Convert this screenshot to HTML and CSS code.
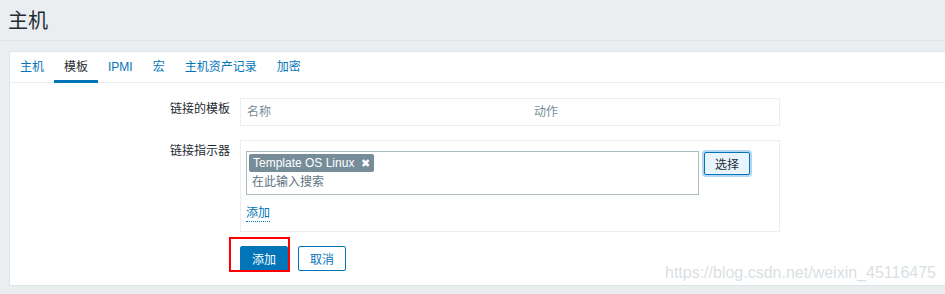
FILE: index.html
```html
<!DOCTYPE html>
<html lang="zh-CN">
<head>
    <meta charset="UTF-8">
    <title>主机</title>
    <link rel="stylesheet" href="styles.css">
</head>
<body>

<header class="page-header">
    <h1>主机</h1>
</header>

<main class="panel">
    <ul class="tabs">
        <li>主机</li>
        <li class="active">模板</li>
        <li>IPMI</li>
        <li>宏</li>
        <li>主机资产记录</li>
        <li>加密</li>
    </ul>

    <form class="form-grid">
        <label class="form-label">链接的模板</label>
        <div class="field">
            <table class="linked-table">
                <tr>
                    <th class="col-name">名称</th>
                    <th>动作</th>
                </tr>
            </table>
        </div>

        <label class="form-label">链接指示器</label>
        <div class="field box">
            <div class="select-row">
                <div class="multiselect">
                    <div class="tags">
                        <span class="tag">Template OS Linux <span class="tag-remove">&#10006;</span></span>
                    </div>
                    <div class="search">在此输入搜索</div>
                </div>
                <button type="button" class="btn-alt">选择</button>
            </div>
            <a class="link-add">添加</a>
        </div>

        <div></div>
        <div class="actions">
            <span class="highlight">
                <button type="submit" class="btn-primary">添加</button>
            </span>
            <button type="button" class="btn-cancel">取消</button>
        </div>
    </form>

    <div class="watermark">https://blog.csdn.net/weixin_45116475</div>
</main>

</body>
</html>
```

FILE: styles.css
```css
body {
    font-family: "Liberation Sans", Arial, "Noto Sans CJK SC", sans-serif;
    font-size: 12px;
    color: #1f2c33;
    margin: 0;
    padding: 0;
    background-color: #ebeef0;
}
.page-header {
    height: 40px;
    padding: 0 8px;
    border-bottom: 1px solid #dfe4e7;
}
.page-header h1 {
    margin: 0;
    font-size: 20px;
    font-weight: normal;
    line-height: 42px;
}
.panel {
    position: relative;
    margin: 10px 0 0 9px;
    background: #fff;
    border: 1px solid #dfe4e7;
    border-right: none;
}
.tabs {
    display: flex;
    list-style: none;
    margin: 0;
    padding: 0;
    height: 31px;
    box-sizing: border-box;
    border-bottom: 1px solid #ebeef0;
}
.tabs li {
    height: 31px;
    line-height: 30px;
    padding: 0 10px;
    color: #0275b8;
    box-sizing: border-box;
}
.tabs li.active {
    color: #1f2c33;
    box-shadow: inset 0 -3px 0 #0275b8;
}
.form-grid {
    display: grid;
    grid-template-columns: 220px 540px;
    column-gap: 10px;
    row-gap: 14px;
    padding: 15px 0 14px 0;
}
.form-label {
    text-align: right;
    line-height: 14px;
    padding-top: 4px;
}
.linked-table {
    width: 100%;
    border-collapse: collapse;
    border: 1px solid #ebeef0;
}
.linked-table th {
    text-align: left;
    font-weight: normal;
    color: #768d99;
    line-height: 14px;
    padding: 6px 6px 6px 6px;
}
.linked-table .col-name {
    width: 275px;
}
.box {
    border: 1px solid #ebeef0;
    padding: 10px 5px 9px 5px;
}
.select-row {
    display: flex;
    align-items: flex-start;
}
.multiselect {
    width: 453px;
    height: 44px;
    box-sizing: border-box;
    border: 1px solid #acbbc2;
    padding: 2px 2px 0 2px;
}
.tags {
    display: flex;
}
.tag {
    display: inline-block;
    height: 18px;
    line-height: 18px;
    padding: 0 4px;
    background: #768d99;
    color: #fff;
    border-radius: 2px;
    font-size: 12px;
}
.tag-remove {
    font-size: 11px;
    margin-left: 3px;
}
.search {
    color: #5e737e;
    line-height: 20px;
    padding-left: 3px;
}
.btn-alt {
    margin: 1px 0 0 5px;
    width: 46px;
    height: 23px;
    padding: 0;
    font-family: inherit;
    font-size: 12px;
    color: #1f2c33;
    background: #e8f5ff;
    border: 1px solid #0275b8;
    border-radius: 2px;
    box-shadow: 0 0 0 2px #b3d7f2;
}
.link-add {
    display: inline-block;
    margin-top: 11px;
    line-height: 15px;
    color: #0275b8;
    border-bottom: 1px dotted #0275b8;
}
.actions {
    display: flex;
    gap: 10px;
}
.highlight {
    position: relative;
    display: inline-block;
}
.highlight::after {
    content: "";
    position: absolute;
    left: -11px;
    top: -9px;
    width: 61px;
    height: 35px;
    box-sizing: border-box;
    border: 2px solid #f00;
}
.btn-primary, .btn-cancel {
    height: 25px;
    padding: 0 11px;
    font-family: inherit;
    font-size: 12px;
    border: 1px solid #0275b8;
    border-radius: 2px;
    cursor: pointer;
}
.btn-primary {
    display: block;
    background: #0275b8;
    color: #fff;
}
.btn-cancel {
    background: #fff;
    color: #0275b8;
}
.watermark {
    position: absolute;
    right: 9px;
    bottom: 3px;
    font-size: 16px;
    color: #dadfe3;
}
```
